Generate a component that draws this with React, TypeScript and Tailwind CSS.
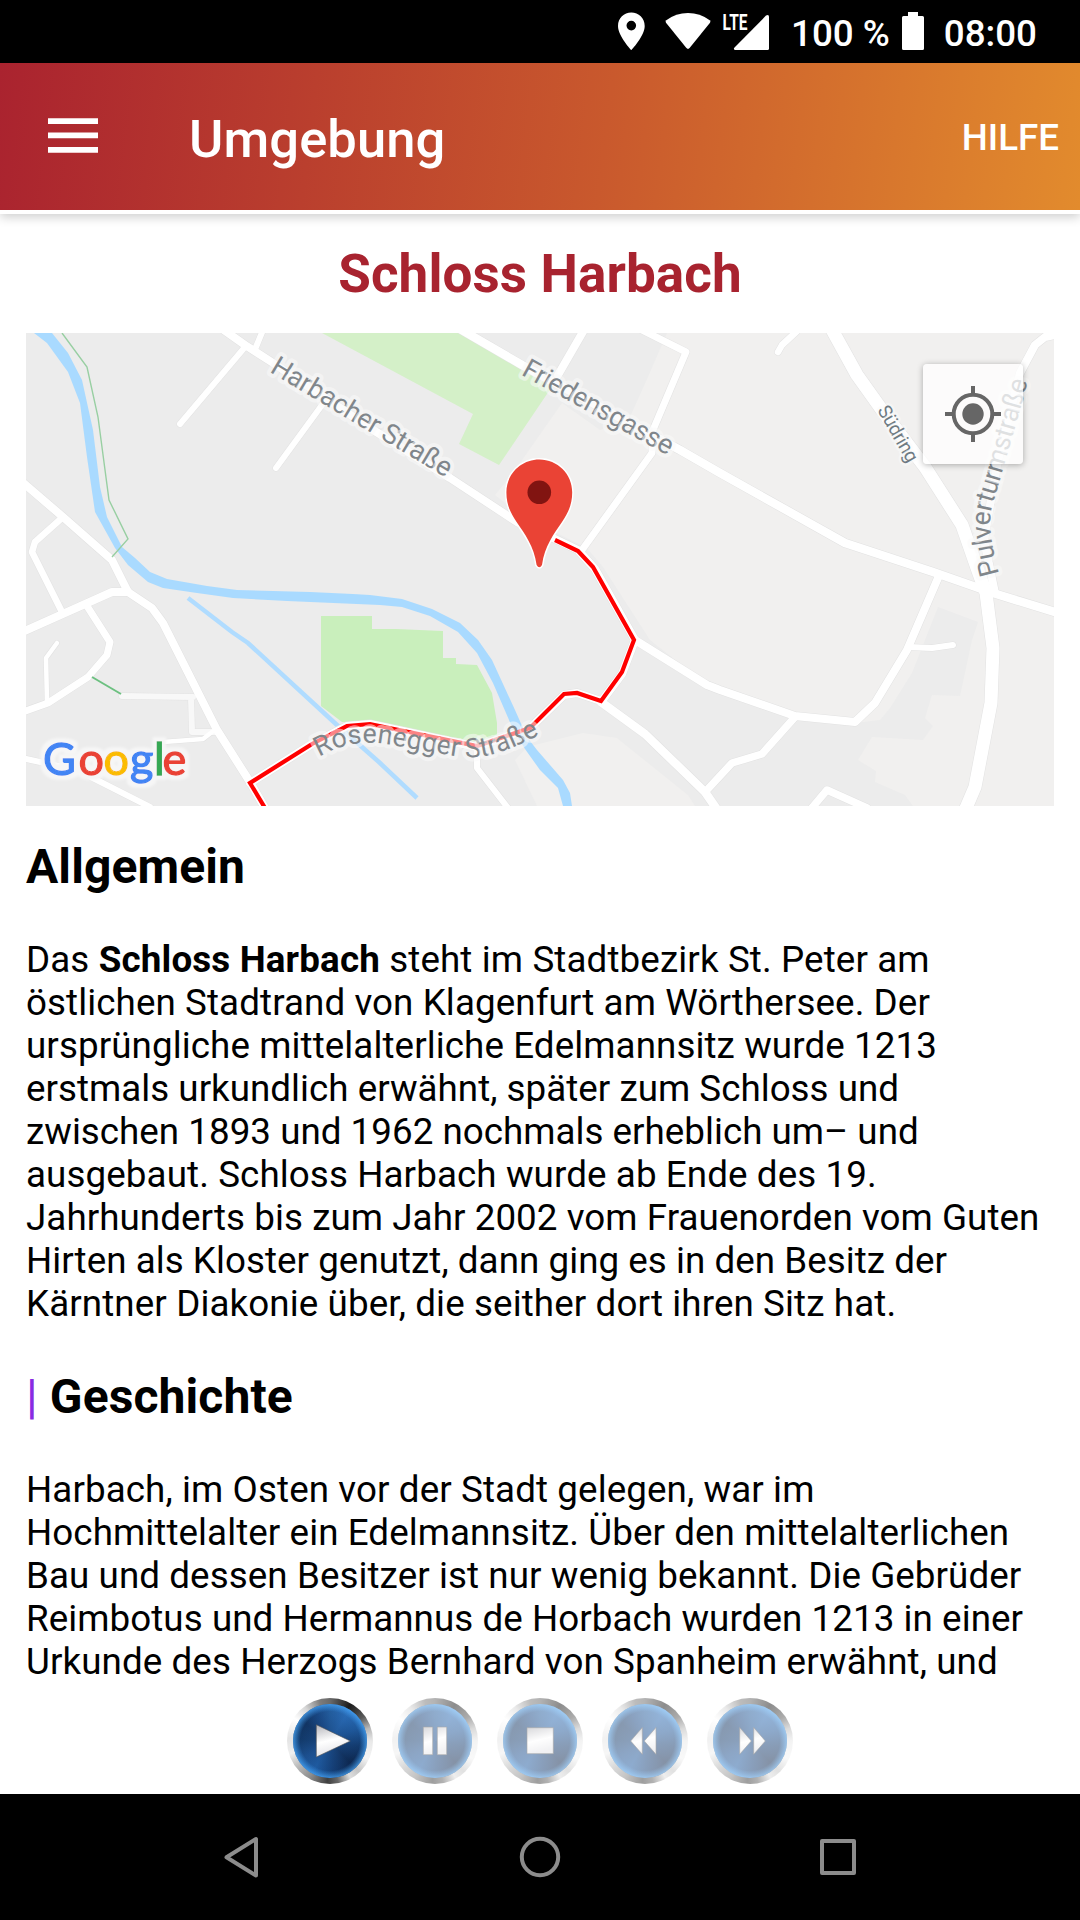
import React from 'react';

const roads: { d: string; w: number; c?: string }[] = [
  { d: 'M122 696 L193 697 M191 697 L192 732 L215 732', w: 6, c: '#f8f8f8' },
  { d: 'M163 742 L203 739 L212 732', w: 4.5 },
  { d: 'M26 759 L77 770 L150 807', w: 6 },
  { d: 'M47 702 L46 658 L57 643', w: 4.5 },
  { d: 'M63 517 L35 542 L32 552 L62 612', w: 6.5 },
  { d: 'M87 606 L110 642 L107 655 L88 677 L48 703 L20 713', w: 7 },
  { d: 'M20 633 L112 592 L128 592', w: 8 },
  { d: 'M20 480 L63 517 L112 560 L128 592 L152 608 L163 623 L217 730 L250 782 L265 808', w: 8 },
  { d: 'M245 347 L180 424', w: 6 },
  { d: 'M263 330 L256 347', w: 6 },
  { d: 'M322 405 L276 468', w: 6 },
  { d: 'M221 328 L245 345 L270 361 L370 428 L450 478 L517 522 L553 538 L578 550 L595 569 L635 640 L622 674 L601 702', w: 8 },
  { d: 'M584 330 L558 375', w: 8 },
  { d: 'M640 329 L686 352 L653 430 L652 453 L582 550', w: 7 },
  { d: 'M460 329 L522 365 L680 450 L720 473 L845 543 L933 572 L993 593 L1058 613', w: 8.5 },
  { d: 'M778 352 L782 345 L797 331', w: 6.5 },
  { d: 'M1060 334 L1045 337 L1035 345 L1020 373 L998 460 L984 540 L995 593', w: 8 },
  { d: 'M938 578 L907 650 L875 703 L855 722 L795 716 L720 690 L707 685 L635 640', w: 8 },
  { d: 'M908 647 L932 648 L953 645', w: 6 },
  { d: 'M795 717 L762 754 L732 763 L706 791', w: 7.5 },
  { d: 'M811 809 L827 790 L867 808', w: 7.5 },
  { d: 'M601 702 L645 734 L705 792 L716 808', w: 8.5 },
  { d: 'M477 747 L477 768 L508 808', w: 6 },
  { d: 'M601 701 L577 693 L564 695 L530 728 L477 747 L370 724 L347 726 L312 744 L250 783', w: 8 },
  { d: 'M830 326 L857 375 L887 417 L925 467 L962 525 L977 568 L986 593 L993 648 L991 703 L975 787 L966 808', w: 13 },
];

function Halo({ size, children, ...rest }: React.SVGProps<SVGTextElement> & { size: number }) {
  return (
    <text fontSize={size} fill="#80868b" stroke="#fafafa" strokeOpacity={0.55} strokeWidth={8} strokeLinejoin="round" paintOrder="stroke" {...rest}>
      {children}
    </text>
  );
}

function AreaMap() {
  return (
    <svg className="block h-full w-full" viewBox="26 333 1028 473" fontFamily="Roboto, sans-serif">
      <defs>
        <filter id="halo" x="-10%" y="-30%" width="120%" height="160%">
          <feMorphology in="SourceAlpha" operator="dilate" radius="4" result="fat" />
          <feGaussianBlur in="fat" stdDeviation="1" result="soft" />
          <feFlood floodColor="#f6f6f6" />
          <feComposite in2="soft" operator="in" result="glow" />
          <feMerge>
            <feMergeNode in="glow" />
            <feMergeNode in="SourceGraphic" />
          </feMerge>
        </filter>
      </defs>
      <rect x="26" y="333" width="1028" height="473" fill="#ececec" />
      <g fill="#f1f0ef">
        <path d="M667 333 L648 377 L630 417 L600 430 L562 403 L513 473 L495 495 L520 515 L557 533 L587 548 L603 567 L650 640 L707 685 L795 716 L855 723 L880 720 L890 708 L912 673 L938 607 L978 622 L972 640 L960 696 L932 695 L925 718 L933 726 L923 740 L872 737 L858 760 L876 771 L875 782 L905 795 L913 806 L1054 806 L1054 333 Z" />
        <path d="M537 806 L515 760 L527 747 L583 733 L617 738 L688 795 L695 806 Z" />
      </g>
      <path d="M322 333 L473 414 L459 444 L499 465 L547 394 L555 383 L468 333 Z" fill="#d4f0c8" />
      <path d="M321 616 H372 V629 L396 629 L443 631 V658 H456 V664 L477 665 L492 693 L497 723 V738 L477 745 L370 724 L342 722 L321 706 Z" fill="#c9efbc" />
      <path d="M188 598 L232 632 L248 643 L337 725 L380 763 L417 798" fill="none" stroke="#b0dcff" strokeWidth="4.5" />
      <g fill="none" strokeLinejoin="round" strokeLinecap="round" stroke="#e2e2e2">
        {roads.map((r, i) => (
          <path key={i} d={r.d} strokeWidth={r.w + 1} />
        ))}
      </g>
      <g fill="none" strokeLinejoin="round" strokeLinecap="round">
        {roads.map((r, i) => (
          <path key={i} d={r.d} stroke={r.c ?? '#fff'} strokeWidth={r.w} />
        ))}
      </g>
      <path
        fill="#a9daff"
        d="M34 333 L47 343 L68 372 L80 403 L87 457 L95 512 L115 548 L128 565 L148 582 L163 588 L197 593 L233 598 L287 601 L380 605 L402 607 L430 616 L458 632 L477 653 L493 683 L512 727 L525 749 L540 770 L558 788 L563 806 L572 806 L570 793 L563 780 L537 750 L527 737 L515 710 L492 660 L478 640 L460 623 L432 609 L402 599 L370 595 L353 594 L310 592 L237 590 L207 586 L167 579 L150 572 L135 558 L122 547 L107 517 L100 487 L93 430 L82 380 L68 353 L52 333 Z"
      />
      <path d="M62 333 L87 367 L98 417 L109 500 L128 539 L112 557" fill="none" stroke="#98cfa2" strokeWidth="1.4" />
      <path d="M92 677 L121 694" stroke="#6cc080" strokeWidth="2" />
      <path
        d="M555 540 L578 551 L593 567 L634 640 L622 672 L601 701 L577 693 L564 694 L530 728 L477 746 L370 724 L347 726 L312 744 L250 783 L265 808"
        fill="none"
        stroke="#f00"
        strokeWidth="4.2"
      />

      <Halo size={27.3} textLength={206} transform="translate(269 371.5) rotate(31)">Harbacher Straße</Halo>
      <Halo size={27.3} textLength={168} transform="translate(520.5 374.5) rotate(28.8)">Friedensgasse</Halo>
      <Halo size={19} textLength={62} fill="#6e7a82" strokeWidth={5} transform="translate(877 410) rotate(60)">Südring</Halo>
      <path id="rosenegger" fill="none" d="M319 757 C343 743 365 741 385 744 S440 754 462 757 S515 749 546 731" />
      <Halo size={27}>
        <textPath href="#rosenegger">Rosenegger Straße</textPath>
      </Halo>
      <path id="pulverturm" fill="none" d="M999 574 C990 540 988 520 993 503 S1012 440 1032 366" />
      <Halo size={27}>
        <textPath href="#pulverturm" textLength={199}>Pulverturmstraße</textPath>
      </Halo>

      <text y="775" fontFamily="Lato, sans-serif" fontSize="45" strokeWidth="1.3" filter="url(#halo)">
        <tspan x="43" fill="#4285f4" stroke="#4285f4">G</tspan>
        <tspan x="78.5" fill="#ea4335" stroke="#ea4335">o</tspan>
        <tspan x="103.5" fill="#fbbc05" stroke="#fbbc05">o</tspan>
        <tspan x="130" fill="#4285f4" stroke="#4285f4">g</tspan>
        <tspan x="154" fill="#34a853" stroke="#34a853">l</tspan>
        <tspan x="162.5" fill="#ea4335" stroke="#ea4335">e</tspan>
      </text>

      <path
        d="M539.3 459.6 C557.5 459.6 572.2 474 572.2 492.3 C572.2 505 568 513 562 522 C554 534 544.5 546 542 565 Q539.3 569.5 536.6 565 C534.1 546 524.6 534 516.6 522 C510.6 513 506.4 505 506.4 492.3 C506.4 474 521.1 459.6 539.3 459.6 Z"
        fill="#ea4335"
        stroke="#fff"
        strokeWidth="3"
        paintOrder="stroke"
      />
      <circle cx="539.3" cy="492.3" r="11.8" fill="#811411" />
    </svg>
  );
}

function LocateIcon() {
  return (
    <svg className="h-14 w-14" viewBox="-28 -28 56 56" fill="none" stroke="#666" strokeWidth="4">
      <circle r="19.3" />
      <circle r="10.7" fill="#666" stroke="none" />
      <path d="M0 -28 V-19 M0 28 V19 M-28 0 H-19 M28 0 H19" />
    </svg>
  );
}

const controls = [
  { label: 'Play', d: 'M-13.7 -16.3 L20.3 0 L-13.7 16 Z' },
  { label: 'Pause', d: 'M-11.7 -14 H-2.3 V13.7 H-11.7 Z M2.3 -14 H11.7 V13.7 H2.3 Z' },
  { label: 'Stop', d: 'M-13 -13.3 H13.3 V12.7 H-13 Z' },
  { label: 'Rewind', d: 'M-14.3 0 L-2.7 -13.5 V13.3 Z M-0.7 0 L11 -13.5 V13.3 Z' },
  { label: 'Forward', d: 'M-10.3 -13.5 L1.3 0 L-10.3 13.3 Z M3.7 -13.5 L15.3 0 L3.7 13.3 Z' },
];

function Player() {
  return (
    <div className="flex h-[104px] shrink-0 justify-center gap-[19px] bg-white pt-2 pr-px">
      <svg className="absolute h-0 w-0">
        <defs>
          <radialGradient id="rim" cx="0.5" cy="0.5" r="0.5">
            <stop offset="0.8" stopColor="#3f9df0" stopOpacity="0" />
            <stop offset="1" stopColor="#4aa8fa" stopOpacity="0.75" />
          </radialGradient>
          <radialGradient id="core" cx="0.5" cy="0.5" r="0.5">
            <stop offset="0" stopColor="#1c4c88" stopOpacity="0.9" />
            <stop offset="1" stopColor="#1c4c88" stopOpacity="0" />
          </radialGradient>
          <linearGradient id="glyph" x1="0" y1="0" x2="0.25" y2="1">
            <stop offset="0" stopColor="#b4b4ba" />
            <stop offset="0.55" stopColor="#fff" />
            <stop offset="1" stopColor="#e4e4e8" />
          </linearGradient>
        </defs>
      </svg>
      {controls.map((c, i) => (
        <button
          key={c.label}
          aria-label={c.label}
          className={
            'flex h-[86px] w-[86px] items-center justify-center rounded-full bg-[conic-gradient(from_0deg,#6a6a6a,#1c1c1c_8%,#5a5a5a_15%,#b8b8b8_20%,#e9e9e9_25%,#f4f4f4_32%,#c5c5c5_38%,#dedede_42%,#666_47%,#3f3f3f_51%,#8c8c8c_58%,#b8b8b8_64%,#efefef_70%,#e4e4e4_76%,#fff_84%,#d5d5d5_90%,#7c7c7c_96%,#6a6a6a)] ' +
            (i === 0 ? '' : 'opacity-50')
          }
        >
          <span className="flex h-[74px] w-[74px] items-center justify-center rounded-full bg-[conic-gradient(from_0deg,#2460a2,#2b70bd_9%,#1f5ba0_18%,#103566_28%,#0a1f42_38%,#123a70_48%,#1f5ea6_58%,#1c5090_66%,#103563_76%,#0f2f5a_85%,#184682_93%,#2460a2)]">
            <svg className="h-[74px] w-[74px]" viewBox="-37 -37 74 74">
              <circle r="37" fill="url(#core)" />
              <circle r="37" fill="url(#rim)" />
              <path d={c.d} fill="url(#glyph)" stroke="#555" strokeOpacity="0.6" strokeWidth="1" />
            </svg>
          </span>
        </button>
      ))}
    </div>
  );
}

function StatusBar() {
  return (
    <div className="flex h-[63px] shrink-0 bg-black text-[36.75px] leading-[67px] font-medium text-white">
      <svg className="ml-[600px] h-[63px] w-[180px] shrink-0" viewBox="600 0 180 63" fill="#fff">
        <path fillRule="evenodd" d="M631.3 12.6 C624 12.6 618 18.4 618 25.9 C618 36 631.3 50 631.3 50 S644.7 36 644.7 25.9 C644.7 18.4 638.7 12.6 631.3 12.6 Z M631.3 20.8 a4.8 4.8 0 1 1 0 9.6 a4.8 4.8 0 0 1 0 -9.6 Z" />
        <path d="M666.3 20.2 Q676 13 688 13 T709.7 20.2 Q711 21.3 710 22.7 L689.8 47.8 Q688 50 686.2 47.8 L666 22.7 Q665 21.3 666.3 20.2 Z" />
        <text x="722.5" y="30" fontFamily="Roboto, sans-serif" fontWeight="700" fontSize="22.5" textLength="25" lengthAdjust="spacingAndGlyphs">LTE</text>
        <path d="M735 50 Q733 49.3 734.5 47.5 L766 15.6 Q769 14 769 17 V48.5 Q769 50 767.5 50 Z" />
      </svg>
      <span className="ml-[11px] whitespace-nowrap">100 %</span>
      <svg className="ml-[11px] h-[63px] w-6 shrink-0" viewBox="901 0 24 63" fill="#fff">
        <path d="M908 12 H918 V16 H922.5 Q924 16 924 17.5 V48.5 Q924 50 922.5 50 H903.5 Q902 50 902 48.5 V17.5 Q902 16 903.5 16 H908 Z" />
      </svg>
      <span className="mr-[43px] ml-auto">08:00</span>
    </div>
  );
}

export default function App() {
  return (
    <div className="flex h-[1920px] w-[1080px] flex-col overflow-hidden bg-white font-[Roboto,sans-serif] text-black">
      <StatusBar />
      <header className="z-10 flex h-[151px] shrink-0 items-start border-b-4 border-white bg-[linear-gradient(97deg,#aa232f,#c9592d_56%,#e28b2d)] text-white shadow-[0_3px_10px_rgba(0,0,0,0.2)]">
        <svg className="mt-[54px] ml-12 h-9 w-[50px]" viewBox="0 0 50 36" fill="#fff">
          <path d="M0 1.3 H50 V7 H0 Z M0 15.5 H50 V21.3 H0 Z M0 30 H50 V35.7 H0 Z" />
        </svg>
        <h1 className="ml-[91px] text-[52.5px] leading-[152px] font-medium tracking-[0.1px]">Umgebung</h1>
        <span className="mr-[21px] ml-auto text-[36.75px] leading-[149px] font-medium">HILFE</span>
      </header>
      <h2 className="h-[119px] shrink-0 text-center text-[53px] leading-[121px] font-bold tracking-[0.1px] text-[#a8232f]">Schloss Harbach</h2>
      <div className="relative mx-[26px] h-[473px] shrink-0 overflow-hidden">
        <AreaMap />
        <button aria-label="Standort" className="absolute top-[31px] right-[31px] flex h-[100px] w-[100px] items-center justify-center rounded-[4px] bg-white/75 shadow-[0_1px_6px_rgba(0,0,0,0.3)]">
          <LocateIcon />
        </button>
      </div>
      <article className="min-h-0 flex-1 overflow-hidden px-[26px] text-[36.75px] leading-[43px] whitespace-nowrap">
        <h3 className="mt-[33px] mb-[43px] text-[48px] leading-[56px] font-bold tracking-[0.1px]">Allgemein</h3>
        <p>
          <span className="block tracking-[0.12px]">Das <b className="tracking-[0.16px]">Schloss Harbach</b> steht im Stadtbezirk St. Peter am</span>
          <span className="block tracking-[0.09px]">östlichen Stadtrand von Klagenfurt am Wörthersee. Der</span>
          <span className="block tracking-[0.09px]">ursprüngliche mittelalterliche Edelmannsitz wurde 1213</span>
          <span className="block tracking-[0.02px]">erstmals urkundlich erwähnt, später zum Schloss und</span>
          <span className="block tracking-[0.02px]">zwischen 1893 und 1962 nochmals erheblich um– und</span>
          <span className="block tracking-[0.1px]">ausgebaut. Schloss Harbach wurde ab Ende des 19.</span>
          <span className="block tracking-[0.065px]">Jahrhunderts bis zum Jahr 2002 vom Frauenorden vom Guten</span>
          <span className="block tracking-[0.04px]">Hirten als Kloster genutzt, dann ging es in den Besitz der</span>
          <span className="block tracking-[0.11px]">Kärntner Diakonie über, die seither dort ihren Sitz hat.</span>
        </p>
        <h3 className="mt-[44px] mb-[43px] text-[48px] leading-[56px] font-bold tracking-[0.1px]">
          <span className="font-normal text-[#8a2be2]">|</span> Geschichte
        </h3>
        <p>
          <span className="block tracking-[0.1px]">Harbach, im Osten vor der Stadt gelegen, war im</span>
          <span className="block tracking-[0.08px]">Hochmittelalter ein Edelmannsitz. Über den mittelalterlichen</span>
          <span className="block tracking-[0.08px]">Bau und dessen Besitzer ist nur wenig bekannt. Die Gebrüder</span>
          <span className="block tracking-[0.065px]">Reimbotus und Hermannus de Horbach wurden 1213 in einer</span>
          <span className="block tracking-[0.09px]">Urkunde des Herzogs Bernhard von Spanheim erwähnt, und</span>
        </p>
      </article>
      <Player />
      <nav className="flex h-[126px] shrink-0 bg-black">
        <svg className="h-[126px] w-full" viewBox="0 1794 1080 126" fill="none" stroke="#8c8c8c" strokeWidth="4" strokeLinejoin="round">
          <path d="M256 1839 V1875.5 L226.5 1857.3 Z" />
          <circle cx="540" cy="1857" r="18.2" />
          <rect x="822" y="1841" width="32" height="32" />
        </svg>
      </nav>
    </div>
  );
}
